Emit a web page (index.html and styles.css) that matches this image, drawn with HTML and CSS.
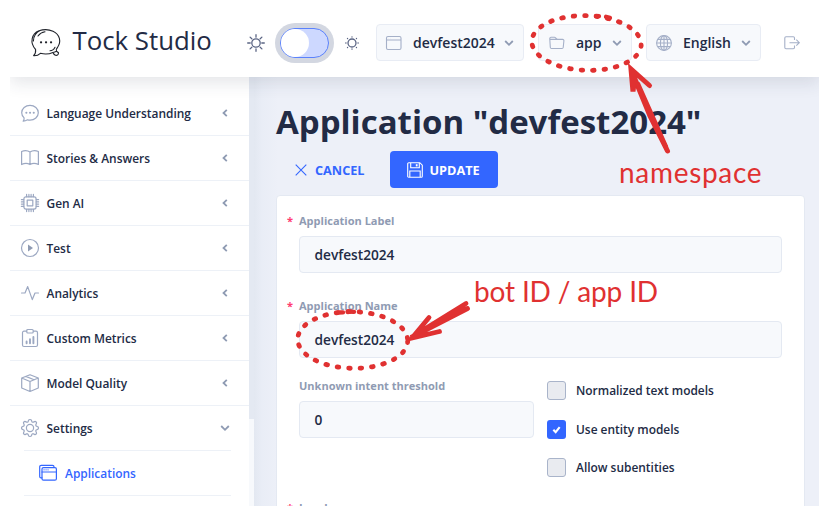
FILE: index.html
```html
<!DOCTYPE html>
<html lang="en">
<head>
<meta charset="utf-8">
<title>Tock Studio</title>
<link rel="stylesheet" href="styles.css">
</head>
<body>
<div class="app">
  <header class="header">
    <svg class="logo" viewBox="0 0 30 28" fill="none" stroke="#20232b" stroke-width="1.1" stroke-linecap="round" stroke-linejoin="round"><path d="M4.600 20.500C-1.500 14 .5 4.500 8 1.800 12 .4 18 .4 22 2.200c7 3.300 8.500 10.500 4.500 16.300M4.600 20.500c.3 2.500-.5 4.700-2 6.200 2.800.2 5-.7 6.800-2.400 4 1.100 8.500 1 12.500-.8M7 7c1.800-2.400 4-3.700 7-4.200M9.500 1.300C5 3.500 2.500 7.500 2.400 12M26.500 18.500c-1.300 1.200-1.700 2.300-1 3.800M19 21.800c2 0 4-1.500 5-3.500M22 23.500c1.500-.2 2.600-.7 3.500-1.200l2 1.500c0 1.800-1.200 2.900-3 2.500-1.200-.4-2-1.400-2.500-2.800"/><path d="M10 13.300h.1M15 13.300h.1M20 13.300h.1" stroke-width="2.200"/></svg>
    <span class="brand">Tock Studio</span>
    <svg class="sun" viewBox="0 0 18 18" fill="none" stroke="#5b6584" stroke-width="1.300" stroke-linecap="round"><circle cx="9" cy="9" r="4.200"/><path d="M9 .7v2.500M9 14.800v2.500M.7 9h2.500M14.800 9h2.500M3.100 3.100l1.700 1.700M13.200 13.200l1.700 1.700M3.100 14.900l1.700-1.700M13.200 4.800l1.700-1.700"/></svg>
    <div class="toggle"><div class="toggle-track"><div class="toggle-knob"></div></div></div>
    <svg class="sun-small" viewBox="0 0 14 14" fill="none" stroke="#5b6584" stroke-width="1.300" stroke-linecap="round"><circle cx="7" cy="7" r="4"/><path d="M7 .8v.2M7 13v.2M.8 7h.2M13 7h.2M2.500 2.500l.1.100M11.400 11.400l.1.100M2.500 11.500l.1-.1M11.400 2.600l.1-.1"/></svg>
    <div class="select select-app">
      <svg class="icon16" viewBox="0 0 16 16"><rect x=".5" y="1.500" width="14.500" height="13" rx="1.500"/><path d="M.5 5H15M2.500 3.300h.1M4.500 3.300h.1"/></svg>
      <span>devfest2024</span>
      <svg class="chev" viewBox="0 0 10 10"><path d="M1.200 3l3.800 3.800L8.800 3"/></svg>
    </div>
    <div class="select select-ns">
      <svg class="icon16" viewBox="0 0 16 16"><path d="M.8 4.200l.5 8.300a1.200 1.200 0 0 0 1.200 1h10.500a1.200 1.200 0 0 0 1.200-1l.7-6.800a1.200 1.200 0 0 0-1.200-1.300H.8V3.300A1.200 1.200 0 0 1 2 2.200h3.500c1.100 0 1.700 2.100 3.200 2.100"/></svg>
      <span>app</span>
      <svg class="chev" viewBox="0 0 10 10"><path d="M1.200 3l3.800 3.800L8.800 3"/></svg>
    </div>
    <div class="select select-lang">
      <svg class="icon16" viewBox="0 0 16 16"><circle cx="8" cy="8" r="7.400"/><ellipse cx="8" cy="8" rx="3.600" ry="7.400"/><path d="M8 .6v14.800M.6 8h14.800M1.700 4.400h12.600M1.700 11.600h12.600"/></svg>
      <span>English</span>
      <svg class="chev" viewBox="0 0 10 10"><path d="M1.200 3l3.800 3.800L8.800 3"/></svg>
    </div>
    <svg class="icon16 logout" viewBox="0 0 16 16"><path d="M10.500 5V3A1.200 1.200 0 0 0 9.300 1.800H2A1.200 1.200 0 0 0 .8 3v9.500A1.200 1.200 0 0 0 2 13.700h7.300a1.200 1.200 0 0 0 1.200-1.200v-2M5.500 7.700h9.700M12.300 4.700l3 3-3 3"/></svg>
  </header>

  <div class="body">
    <nav class="sidebar">
      <div class="item"><svg class="icon" viewBox="0 0 18 18"><path d="M2.200 17.200c.8-1 1-2 .9-3.300C1.600 12.500.7 10.700.7 8.700.7 4.600 4.400 1.300 9 1.300s8.300 3.300 8.300 7.400S13.600 16.100 9 16.100c-.9 0-1.700-.1-2.500-.3-1.300.8-2.700 1.300-4.300 1.400z"/><path d="M5.300 8.800h.1M9 8.800h.1M12.700 8.800h.1" stroke-width="2"/></svg><span>Language Understanding</span><svg class="chev" viewBox="0 0 10 10"><path d="M6.800 1.800L3.500 5l3.300 3.200"/></svg></div>
      <div class="item"><svg class="icon" viewBox="0 0 18 18"><path d="M9 3v12.500C6.500 14 3.500 14 .6 15.500V2.500C3.500 1.200 6.500 1.300 9 3c2.500-1.700 5.500-1.800 8.400-.5v13C14.500 14 11.500 14 9 15.500"/></svg><span>Stories &amp; Answers</span><svg class="chev" viewBox="0 0 10 10"><path d="M6.800 1.800L3.500 5l3.300 3.200"/></svg></div>
      <div class="item"><svg class="icon" viewBox="0 0 18 18"><rect x="2.900" y="2.900" width="12.200" height="12.200" rx="2"/><rect x="6.200" y="6.200" width="5.600" height="5.600"/><path d="M5.600.4v2.300M7.900.4v2.300M10.100.4v2.300M12.400.4v2.300M5.600 15.300v2.300M7.900 15.300v2.300M10.100 15.300v2.300M12.400 15.300v2.300M.4 5.600h2.300M.4 7.900h2.300M.4 10.100h2.300M.4 12.400h2.300M15.300 5.600h2.300M15.300 7.900h2.300M15.300 10.100h2.300M15.300 12.400h2.300"/></svg><span>Gen AI</span><svg class="chev" viewBox="0 0 10 10"><path d="M6.800 1.800L3.500 5l3.300 3.200"/></svg></div>
      <div class="item"><svg class="icon" viewBox="0 0 18 18"><circle cx="9" cy="9" r="8.500"/><path class="solid" d="M7 5.500v7l5-3.500z"/></svg><span>Test</span><svg class="chev" viewBox="0 0 10 10"><path d="M6.800 1.800L3.500 5l3.300 3.200"/></svg></div>
      <div class="item"><svg class="icon" viewBox="0 0 18 18"><path d="M.5 9H4l2.700-6.400 4.600 13L14 9h3.500"/></svg><span>Analytics</span><svg class="chev" viewBox="0 0 10 10"><path d="M6.800 1.800L3.500 5l3.300 3.200"/></svg></div>
      <div class="item"><svg class="icon" viewBox="0 0 18 18"><path d="M5.500 2.200H3A1.500 1.500 0 0 0 1.500 3.700V16A1.500 1.500 0 0 0 3 17.500h12a1.500 1.500 0 0 0 1.500-1.500V3.700A1.500 1.500 0 0 0 15 2.200h-2.500"/><rect x="5.800" y=".5" width="6.400" height="3.500" rx="1"/><path d="M5.600 14.300v-1.800M9 14.300V10.300M12.400 14.300V8" stroke-width="1.900"/></svg><span>Custom Metrics</span><svg class="chev" viewBox="0 0 10 10"><path d="M6.800 1.800L3.500 5l3.300 3.200"/></svg></div>
      <div class="item"><svg class="icon" viewBox="0 0 18 18"><path d="M9 .7l8.300 3.300v10L9 17.500.7 14V4zM.7 4L9 7.500 17.300 4M9 7.500v10M4.800 2.400l8.300 3.400"/></svg><span>Model Quality</span><svg class="chev" viewBox="0 0 10 10"><path d="M6.800 1.800L3.500 5l3.300 3.200"/></svg></div>
      <div class="item item-open"><svg class="icon" viewBox="0 0 18 18"><circle cx="9" cy="9" r="3.600"/><path d="M7.500 1.400c.4-1.200 2.600-1.200 3 0l.3 1c.3.700 1 1 1.700.7l1-.5c1.200-.5 2.500.8 1.900 2l-.5 1c-.3.600 0 1.400.7 1.600l1 .4c1.200.4 1.200 2.400 0 2.800l-1 .4c-.7.200-1 1-.7 1.600l.5 1c.6 1.200-.7 2.500-1.900 2l-1-.5c-.7-.3-1.400 0-1.700.7l-.3 1c-.4 1.200-2.600 1.200-3 0l-.3-1c-.3-.7-1-1-1.700-.7l-1 .5c-1.200.5-2.500-.8-1.900-2l.5-1c.3-.6 0-1.400-.7-1.600l-1-.4c-1.200-.4-1.200-2.400 0-2.800l1-.4c.7-.2 1-1 .7-1.600l-.5-1c-.6-1.200.7-2.500 1.900-2l1 .5c.7.3 1.400 0 1.700-.7z"/></svg><span>Settings</span><svg class="chev" viewBox="0 0 10 10"><path d="M1.200 3l3.800 3.800L8.800 3"/></svg></div>
      <div class="subitem"><svg class="icon" viewBox="0 0 18 18"><path d="M3 13.800H2A1.300 1.300 0 0 1 .7 12.500V2.800A1.500 1.500 0 0 1 2.200 1.300h11.300A1.500 1.500 0 0 1 15 2.800v.7"/><rect x="3" y="3.600" width="14.400" height="12.600" rx="1.500"/><path d="M3 8h14.400M5 5.800h.1M7 5.800h.1M9 5.800h.1"/></svg><span>Applications</span></div>
    </nav>
    <div class="scrollbar"><div class="thumb"></div></div>
    <main class="main">
      <h1>Application "devfest2024"</h1>
      <div class="actions">
        <div class="cancel"><svg viewBox="0 0 12 12"><path d="M.7.7l10.600 10.600M11.300.7L.7 11.300"/></svg><span>CANCEL</span></div>
        <div class="update"><svg viewBox="0 0 16 16"><path d="M1.800.7h11l2.500 2.500v11a1.100 1.100 0 0 1-1.100 1.100H1.800a1.100 1.100 0 0 1-1.100-1.100V1.800A1.100 1.100 0 0 1 1.800.7zM3.700.7v5h8.600v-5M2.800 15.300V9h10.400v6.300"/><path d="M9.700 2.200v2.200" stroke-width="1.800"/></svg><span>UPDATE</span></div>
      </div>
      <section class="card">
        <div class="label required">Application Label</div>
        <div class="input">devfest2024</div>
        <div class="label required second">Application Name</div>
        <div class="input">devfest2024</div>
        <div class="row">
          <div class="threshold"><div class="label">Unknown intent threshold</div><div class="input">0</div></div>
          <div class="checks">
            <div class="check"><i class="box"></i><span>Normalized text models</span></div>
            <div class="check"><i class="box checked"><svg viewBox="0 0 18 18"><path d="M6 9.300l2.200 2.200L12 6.800"/></svg></i><span>Use entity models</span></div>
            <div class="check"><i class="box"></i><span>Allow subentities</span></div>
          </div>
        </div>
        <div class="label required locales">Locales</div>
      </section>
    </main>
  </div>
</div>
<div class="notes">
  <svg viewBox="0 0 828 516" fill="none" stroke="#e03131" stroke-linecap="round">
    <ellipse cx="586.500" cy="43" rx="54.700" ry="27.300" stroke-width="4.800" stroke-dasharray="1.600 9.900" transform="rotate(2 586.500 43)"/>
    <path d="M596 16l3 .2M606 16.800l4 1" stroke-width="4.300"/>
    <path d="M667.500 151L650 116 632 72" stroke-width="5"/>
    <path d="M649.500 85.500L631 69l2 22.500 2-16" stroke-width="5"/>
    <path d="M666 147L638 84" stroke-width="4.500"/>
    <ellipse cx="352.700" cy="340" rx="55" ry="28.300" stroke-width="4.800" stroke-dasharray="1.600 9.900" transform="rotate(1 352.700 340)"/>
    <path d="M338 312.500l5-.2M348 311.500l6 .3" stroke-width="4.300"/>
    <path d="M466 303.500L411 337.500l56.500-29M429 317.500L412 338l27.500-6.500M422 329l-8 7" stroke-width="4.800"/>
  </svg>
  <span class="note note-ns">namespace</span>
  <span class="note note-id">bot ID / app ID</span>
</div>
</body>
</html>
```
FILE: styles.css
```css
* { box-sizing: border-box; }
body { margin: 0; width: 828px; height: 516px; overflow: hidden; background: #fff; color: #222b45; font-family: "Open Sans", sans-serif; font-weight: 600; }
svg { display: block; flex: none; overflow: visible; }
.app { width: 809px; height: 496px; margin: 10px; overflow: hidden; }
.header { position: relative; z-index: 1; display: flex; align-items: center; height: 67px; padding: 0 0 2px 21px; background: #fff; box-shadow: 0 6px 16px rgba(44, 51, 73, .12); }
.logo { width: 30px; height: 28px; }
.brand { width: 140px; margin: -5px 0 0 11.500px; font-size: 25.800px; font-weight: 400; line-height: 36px; white-space: nowrap; }
.sun { width: 18px; height: 18px; margin-left: 34.500px; }
.toggle { width: 59px; height: 40px; margin-left: 10px; padding: 5px; border-radius: 20px; background: #d3d7e1; }
.toggle-track { width: 49px; height: 30px; border: 1px solid #5b82fc; border-radius: 15px; background: #cdd8ff; }
.toggle-knob { width: 28px; height: 28px; border-radius: 50%; background: #fff; }
.sun-small { width: 14px; height: 14px; margin-left: 10.500px; }
.select { display: flex; align-items: center; height: 37px; padding: 0 9px; border: 1px solid #e8ecf4; border-radius: 4px; background: #f7f9fc; font-size: 14px; }
.icon16 { width: 16px; height: 16px; fill: none; stroke: #a5b0c8; stroke-width: 1.100; }
.select span { flex: 1; }
.chev { width: 10px; height: 10px; fill: none; stroke: #8f9bb3; stroke-width: 1.800; }
.select-app { width: 148px; margin-left: 17.500px; }
.select-app span { padding-left: 11px; }
.select-ns { width: 94px; margin-left: 14px; padding-left: 10px; }
.select-ns span { padding-left: 11px; }
.select-lang { width: 115px; margin-left: 14px; }
.select-lang span { padding-left: 11px; }
.logout { margin-left: 23px; }
.body { display: flex; height: 429px; }
.sidebar { width: 239px; padding-top: 14px; background: #fff; font-size: 11.930px; }
.item { display: flex; align-items: center; height: 45px; padding: 0 19px 0 11px; border-bottom: 1px solid #edf1f7; }
.item span { flex: 1; padding-left: 7.500px; }
.icon { width: 18px; height: 18px; fill: none; stroke: #9ca8c2; stroke-width: 1.200; stroke-linejoin: round; stroke-linecap: round; }
.solid { fill: #8f9bb3; stroke: none; }
.item-open { border-bottom: 0; height: 44px; }
.subitem { display: flex; align-items: center; height: 46px; margin: 0 18px 0 14px; padding-left: 15px; border: solid #edf1f7; border-width: 1px 0; color: #3366ff; font-size: 11.930px; }
.subitem .icon { stroke: #3366ff; }
.subitem span { padding-left: 8px; }
.scrollbar { width: 5px; background: #f7f9fc; }
.thumb { height: 342px; background: #e4e9f2; }
.main { flex: 1; padding: 24px 0 0 22px; background: linear-gradient(90deg, #e3e8f1, #e9edf6 8px, #edf0f8 24px); }
h1 { margin: 0; font-size: 33px; font-weight: 700; line-height: 42px; white-space: nowrap; }
.actions { display: flex; height: 37px; margin-top: 8px; font-size: 12.700px; font-weight: 700; line-height: 16px; }
.actions svg { fill: none; stroke: currentColor; stroke-width: 1.100; }
.cancel, .update { display: flex; align-items: center; }
.cancel { width: 114px; padding-left: 19px; color: #3366ff; }
.cancel svg { width: 12px; height: 12px; }
.cancel span { padding-left: 8px; }
.update { width: 108px; padding-left: 17px; border-radius: 4px; background: #3366ff; color: #fff; }
.update svg { width: 16px; height: 16px; }
.update span { padding-left: 6.500px; }
.card { width: 529px; height: 340px; margin-top: 7px; padding: 17px 22px 0; border: 1px solid #e4e9f2; border-radius: 4px; background: #fff; }
.label { height: 16px; color: #8f9bb3; font-size: 11.030px; font-weight: 700; line-height: 16px; }
.required::before { content: "*"; display: inline-block; width: 12px; margin-left: -12px; color: #ff3d71; }
.input { height: 37px; margin-top: 7px; padding-left: 14.500px; border: 1px solid #e4e9f2; border-radius: 4px; background: #f7f9fc; font-size: 13.700px; line-height: 35px; }
.second { margin-top: 25px; }
.row { display: flex; gap: 13px; height: 102px; margin-top: 20px; }
.threshold { width: 235px; }
.checks { padding-top: 3px; font-size: 11.930px; line-height: 17px; }
.check { display: flex; align-items: center; height: 19px; margin-bottom: 19.500px; }
.check span { padding-left: 10px; }
.box { width: 19px; height: 19px; border: 1px solid #a9b4ca; border-radius: 3px; background: #e9ebf0; }
.checked { border: 0; background: #3366ff; }
.checked path { fill: none; stroke: #fff; stroke-width: 2; }
.locales { margin-top: 20px; }
.notes { position: absolute; inset: 0; z-index: 2; }
.note { position: absolute; color: #e03131; font-family: Lato, sans-serif; font-weight: 400; font-size: 28px; line-height: 34px; white-space: nowrap; }
.note-ns { left: 619px; top: 155px; letter-spacing: .7px; }
.note-id { left: 474px; top: 274px; letter-spacing: -.15px; }
```
